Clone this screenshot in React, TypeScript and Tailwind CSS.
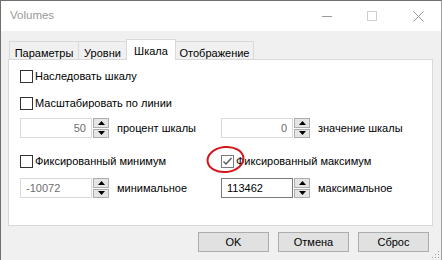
import React from "react";

const font = { fontFamily: '"Liberation Sans", Arial, sans-serif' };

function Check({ checked, label }: { checked?: boolean; label: string }) {
  return (
    <div className="flex items-center h-[20px]">
      <div
        className={
          "w-[13px] h-[13px] bg-white border flex items-center justify-center " +
          (checked ? "border-[#7a7a7a]" : "border-[#333333]")
        }
      >
        {checked && (
          <svg width="11" height="11" viewBox="0 0 11 11">
            <polyline points="1.5,5.5 4,8 9.5,2" fill="none" stroke="#5a5a5a" strokeWidth="1.4" />
          </svg>
        )}
      </div>
      <span className="ml-[2px] text-[11px] text-black leading-none">{label}</span>
    </div>
  );
}

function Spin({
  value,
  label,
  disabled,
  right,
}: {
  value: string;
  label: string;
  disabled?: boolean;
  right?: boolean;
}) {
  return (
    <div className="flex items-center h-[20px]">
      <div
        className={
          "w-[72px] h-[20px] bg-white border flex items-center text-[11px] px-[5px] " +
          (disabled ? "border-[#d9d9d9] text-[#6d6d6d] " : "border-[#7a7a7a] text-black ") +
          (right ? "justify-end" : "justify-start")
        }
      >
        {value}
      </div>
      <div className="ml-[1px] w-[16px] h-[20px] flex flex-col gap-[1px]">
        <div className="flex-1 bg-[#e5e5e5] border border-[#adadad] flex items-center justify-center">
          <svg width="7" height="4" viewBox="0 0 7 4">
            <polygon points="0,4 7,4 3.5,0" fill="#000" />
          </svg>
        </div>
        <div className="flex-1 bg-[#e5e5e5] border border-[#adadad] flex items-center justify-center">
          <svg width="7" height="4" viewBox="0 0 7 4">
            <polygon points="0,0 7,0 3.5,4" fill="#000" />
          </svg>
        </div>
      </div>
      <span className="ml-[8px] text-[11px] text-black">{label}</span>
    </div>
  );
}

function Tab({ label, active, w }: { label: string; active?: boolean; w: string }) {
  return (
    <div
      className={
        "-ml-px first:ml-0 border border-b-0 border-[#d9d9d9] flex justify-center text-[11px] text-black " +
        w +
        (active
          ? " h-[21px] bg-white z-10 relative mb-[-1px] items-start pt-[3px]"
          : " h-[18px] bg-[#f0f0f0] items-start pt-[3px]")
      }
    >
      {label}
    </div>
  );
}

function Btn({ label }: { label: string }) {
  return (
    <div className="w-[71px] h-[20px] bg-[#e1e1e1] border border-[#adadad] flex items-center justify-center text-[11px] text-black">
      {label}
    </div>
  );
}

export default function App() {
  return (
    <div
      className="w-[442px] h-[260px] bg-[#f0f0f0] border-l border-t border-r border-l-[#6f6f6f] border-t-[#6f6f6f] border-r-[#a0a0a0] flex flex-col relative overflow-hidden"
      style={font}
    >
      {/* Title bar */}
      <div className="h-[30px] bg-white flex items-center shrink-0">
        <span className="ml-[9px] text-[11.5px] text-[#999999]">Volumes</span>
        <div className="ml-auto flex items-center">
          <svg width="10" height="10" viewBox="0 0 10 10" className="mr-[35px]">
            <line x1="0" y1="5.5" x2="10" y2="5.5" stroke="#9a9a9a" strokeWidth="1" />
          </svg>
          <svg width="10" height="10" viewBox="0 0 10 10" className="mr-[36px]">
            <rect x="0.5" y="0.5" width="9" height="9" fill="none" stroke="#cfcfcf" strokeWidth="1" />
          </svg>
          <svg width="11" height="11" viewBox="0 0 11 11" className="mr-[17px]">
            <line x1="0.5" y1="0.5" x2="10.5" y2="10.5" stroke="#9a9a9a" strokeWidth="1" />
            <line x1="10.5" y1="0.5" x2="0.5" y2="10.5" stroke="#9a9a9a" strokeWidth="1" />
          </svg>
        </div>
      </div>

      {/* Tabs */}
      <div className="mt-[7px] ml-[8px] flex items-end h-[21px] shrink-0">
        <Tab label="Параметры" w="w-[70px]" />
        <Tab label="Уровни" w="w-[49px]" />
        <Tab label="Шкала" w="w-[50px]" active />
        <Tab label="Отображение" w="w-[79px]" />
      </div>

      {/* Panel */}
      <div className="ml-[7px] w-[425px] h-[167px] bg-white border border-[#d9d9d9] shrink-0 pl-[11px] pt-[6px]">
        <Check label="Наследовать шкалу" />
        <div className="mt-[7px]">
          <Check label="Масштабировать по линии" />
        </div>
        <div className="mt-[5px] grid grid-cols-[201px_1fr]">
          <Spin value="50" label="процент шкалы" disabled right />
          <Spin value="0" label="значение шкалы" disabled right />
        </div>
        <div className="mt-[13px] grid grid-cols-[201px_1fr]">
          <Check label="Фиксированный минимум" />
          <Check label="Фиксированный максимум" checked />
        </div>
        <div className="mt-[7px] grid grid-cols-[201px_1fr]">
          <Spin value="-10072" label="минимальное" disabled />
          <Spin value="113462" label="максимальное" />
        </div>
      </div>

      {/* Buttons */}
      <div className="mt-[6px] flex justify-end gap-[9px] pr-[12px]">
        <Btn label="OK" />
        <Btn label="Отмена" />
        <Btn label="Сброс" />
      </div>

      {/* Size grip */}
      <svg width="10" height="10" viewBox="0 0 10 10" className="absolute right-[1px] bottom-[1px]">
        {[
          [8, 2],
          [8, 5],
          [5, 5],
          [8, 8],
          [5, 8],
          [2, 8],
        ].map(([x, y], i) => (
          <rect key={i} x={x} y={y} width="1" height="1" fill="#a0a0a0" />
        ))}
      </svg>

      {/* Red annotation ellipse */}
      <svg width="442" height="260" className="absolute left-[-1px] top-[-1px] pointer-events-none">
        <ellipse
          cx="225.5"
          cy="159.5"
          rx="18"
          ry="12.5"
          fill="none"
          stroke="#d4161b"
          strokeWidth="2"
          transform="rotate(-6 225.5 159.5)"
        />
      </svg>
    </div>
  );
}
